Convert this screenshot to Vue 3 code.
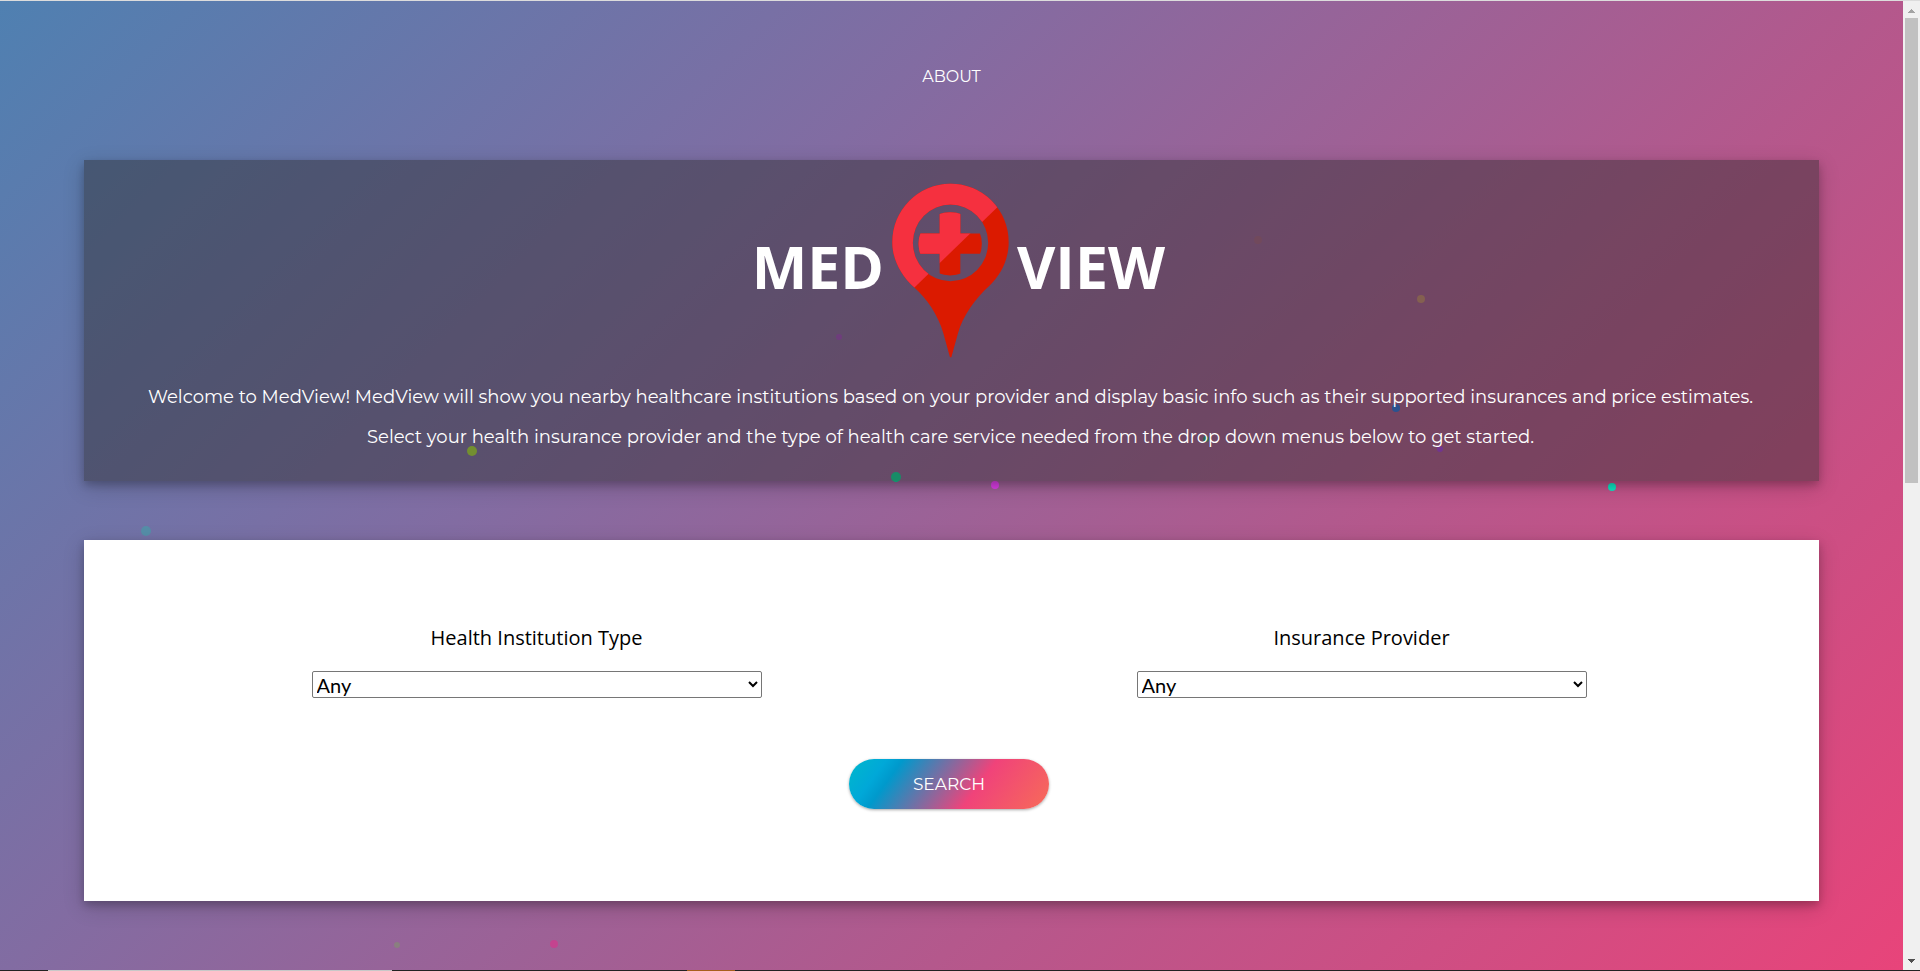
<script setup>
import { ref } from 'vue'

const institution = ref('Any')
const provider = ref('Any')

const particles = [
  { x: 146, y: 530, r: 5, color: '#568ea8' },
  { x: 472, y: 450, r: 5, color: '#ade033' },
  { x: 896, y: 476, r: 5, color: '#09da97' },
  { x: 995, y: 484, r: 4, color: '#e040ea' },
  { x: 1612, y: 486, r: 4, color: '#0ce8c4' },
  { x: 1396, y: 407, r: 4, color: '#2a71e0' },
  { x: 1206, y: 438, r: 3, color: '#319c6b' },
  { x: 1440, y: 448, r: 3, color: '#a93ce1' },
  { x: 839, y: 336, r: 3, color: '#a54bbd' },
  { x: 1421, y: 298, r: 4, color: '#cc8a6d' },
  { x: 1258, y: 239, r: 4, color: '#aa6284' },
  { x: 397, y: 944, r: 3, color: '#8a7f80' },
  { x: 554, y: 943, r: 4, color: '#c4438f' }
]
</script>

<template>
  <div class="window">
    <div class="top-edge"></div>
    <div class="viewport">
      <div class="page">
        <svg class="particles" aria-hidden="true">
          <circle v-for="(p, i) in particles" :key="i" :cx="p.x" :cy="p.y" :r="p.r" :fill="p.color" />
        </svg>
        <nav class="nav"><a href="#about">ABOUT</a></nav>
        <main class="content">
          <section class="hero">
            <h1 class="logo">
              <span class="word left">MED</span>
              <svg class="pin" viewBox="575 71 351 522" aria-hidden="true">
                <defs>
                  <clipPath id="upper"><path d="M500 0H1038L500 520.600Z" /></clipPath>
                  <clipPath id="disc"><circle cx="749.500" cy="252" r="95" /></clipPath>
                  <g id="shape">
                    <path fill-rule="evenodd" d="M750 71.500A175 175 0 0 1 925 247C925 299 902 344 868 377C825 416 787 469 773 520L753 592H749L729 520C715 469 680 416 642 383C602 347 576 299 576 247A175 175 0 0 1 750 71.500ZM750.500 134A113 115 0 1 0 750.500 364A113 115 0 1 0 750.500 134Z" />
                    <path clip-path="url(#disc)" d="M718 150H780V221H850V282H780V355H718V282H650V221H718Z" />
                  </g>
                </defs>
                <use href="#shape" fill="#db1a00" />
                <use href="#shape" fill="#f5303f" clip-path="url(#upper)" />
              </svg>
              <span class="word">VIEW</span>
            </h1>
            <p class="intro">
              Welcome to MedView! MedView will show you nearby healthcare institutions based on your provider and display basic info such as their supported insurances and price estimates.<br />
              Select your health insurance provider and the type of health care service needed from the drop down menus below to get started.
            </p>
          </section>
          <form class="search" @submit.prevent>
            <div class="fields">
              <div class="field">
                <label for="institution">Health Institution Type</label>
                <select id="institution" v-model="institution"><option>Any</option></select>
              </div>
              <div class="field">
                <label for="provider">Insurance Provider</label>
                <select id="provider" v-model="provider"><option>Any</option></select>
              </div>
            </div>
            <button class="submit" type="submit">SEARCH</button>
          </form>
        </main>
      </div>
      <div class="scrollbar" aria-hidden="true">
        <svg class="arrow up" viewBox="0 0 17 17"><path d="M8 8h1v1h1v1h1v1h1v1H5v-1h1v-1h1V9h1z" /></svg>
        <div class="track"><div class="thumb"></div></div>
        <svg class="arrow" viewBox="0 0 17 17"><path d="M5 6h7v1h-1v1h-1v1H9v1H8V9H7V8H6V7H5z" /></svg>
      </div>
    </div>
    <div class="bottom-edge"><i></i><i class="light"></i><i></i><i class="orange"></i><i></i></div>
  </div>
</template>

<style>
body { margin: 0; }
</style>

<style scoped>
.window {
  display: grid;
  grid-template-rows: 1px 1fr 1px;
  min-height: 100vh;
}
.top-edge { background: #dcdcdc; }
.viewport { display: flex; }
.page {
  position: relative;
  flex: 1;
  font-family: Montserrat, Inter, sans-serif;
  background: linear-gradient(135deg, #4f80b1 0%, #826ca2 34%, #b4588c 66%, #e8447a 100%);
}
.particles {
  position: absolute;
  inset: 0;
  width: 100%;
  height: 100%;
}
.nav {
  display: flex;
  justify-content: center;
  padding: 64px 0 71px;
  font-size: 16px;
  line-height: 24px;
}
.nav a {
  position: relative;
  color: #fff;
  text-decoration: none;
}
.content {
  position: relative;
  display: flex;
  flex-direction: column;
  gap: 59px;
  padding: 0 84px 68px;
}
.hero,
.search {
  box-shadow: 0 4px 8px 0 rgba(0, 0, 0, 0.2), 0 6px 20px 0 rgba(0, 0, 0, 0.19);
}
.hero {
  padding: 23px 23px 24px 21px;
  background: rgba(45, 45, 45, 0.45);
  color: #fff;
}
.logo {
  display: grid;
  grid-template-columns: 1fr auto 1fr;
  align-items: center;
  gap: 8px;
  margin: 0 0 19px;
}
.word {
  padding-bottom: 10px;
  font: 700 59px/60px "Open Sans", sans-serif;
  color: #fff;
}
.left { text-align: right; }
.pin {
  display: block;
  width: 117px;
  height: 175px;
}
.intro {
  margin: 0;
  font-size: 18px;
  line-height: 40px;
  text-align: center;
}
.search {
  display: flex;
  flex-direction: column;
  align-items: center;
  gap: 61px;
  padding: 86px 45px 92px 40px;
  background: #fff;
}
.fields {
  display: grid;
  grid-template-columns: 1fr 1fr;
  width: 100%;
}
.field {
  display: flex;
  flex-direction: column;
  align-items: center;
  gap: 21px;
  font-family: "Trebuchet MS", "Open Sans", sans-serif;
}
.field label {
  font-size: 20px;
  line-height: 24px;
  color: #000;
}
.field select {
  width: 450px;
  height: 27px;
  padding: 0;
  border: 1px solid #767676;
  border-radius: 2px;
  background: #fff;
  color: #000;
  font-family: "Trebuchet MS", Lato, sans-serif;
  font-size: 20px;
}
.submit {
  width: 200px;
  height: 50px;
  border: 0;
  border-radius: 25px;
  background: linear-gradient(126deg, #00b8cc 0%, #00a8d8 16%, #0099cc 23%, #f0437a 63%, #f76b58 100%);
  box-shadow: 0 1px 3px rgba(0, 0, 0, 0.35);
  color: #fff;
  font-family: inherit;
  font-size: 17px;
}
.scrollbar {
  display: flex;
  flex-direction: column;
  width: 17px;
  background: #f0f0f0;
}
.arrow {
  width: 17px;
  height: 17px;
  fill: #505050;
}
.up { fill: #a3a3a3; }
.track {
  flex: 1;
  padding: 0 2px;
}
.thumb {
  height: 49.7%;
  background: #c1c1c1;
}
.bottom-edge {
  display: grid;
  grid-template-columns: 48fr 344fr 295fr 48fr 1185fr;
  background: #222;
}
.light { background: #c8c8c8; }
.orange { background: #a8601c; }
</style>
